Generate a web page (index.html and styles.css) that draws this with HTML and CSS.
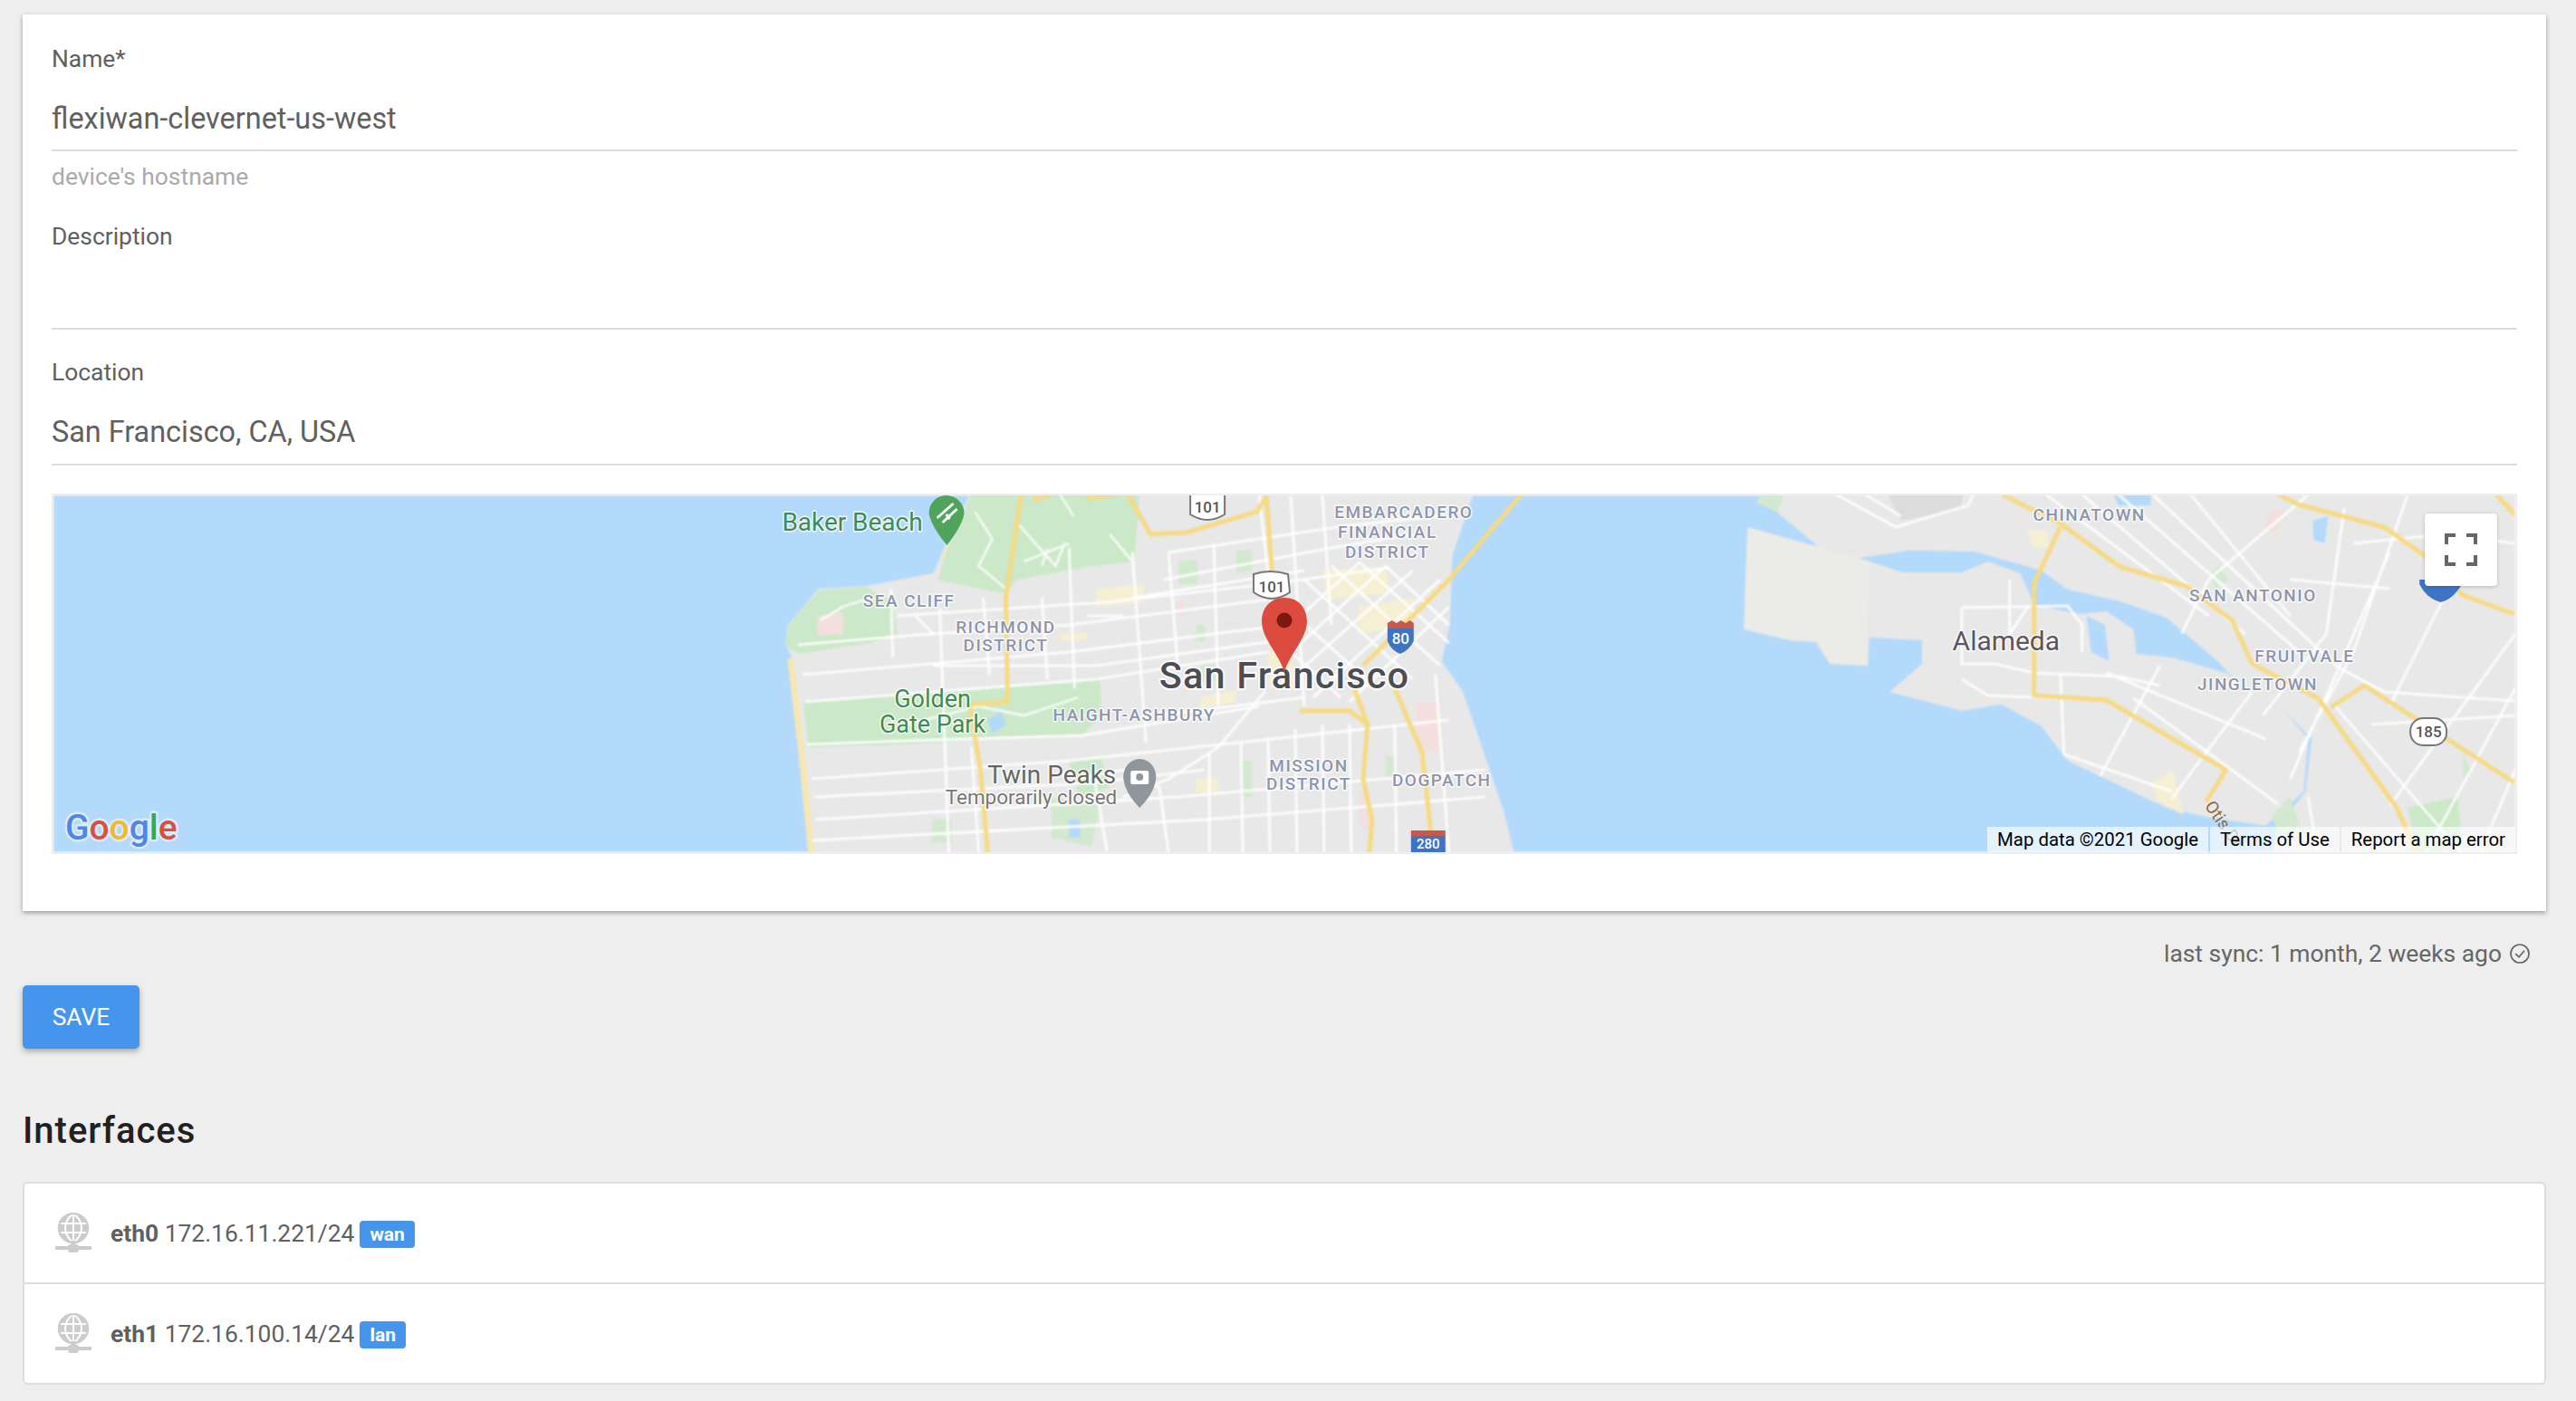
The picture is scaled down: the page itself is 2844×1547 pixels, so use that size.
FILE: index.html
```html
<!DOCTYPE html>
<html lang="en">
<head>
  <meta charset="UTF-8">
  <meta name="viewport" content="width=device-width, initial-scale=1.0">
  <title>Device</title>
  <link rel="stylesheet" href="styles.css">
</head>
<body>
  <div class="page">
    <form class="card">
      <div class="field">
        <label class="field-label">Name*</label>
        <div class="field-value">flexiwan-clevernet-us-west</div>
      </div>
      <div class="field-help">device's hostname</div>
      <div class="field field-next">
        <label class="field-label">Description</label>
        <div class="field-value"></div>
      </div>
      <div class="field field-next">
        <label class="field-label">Location</label>
        <div class="field-value">San Francisco, CA, USA</div>
      </div>

      <div class="map">
        <svg class="map-canvas" viewBox="57 547 2722 394" preserveAspectRatio="none">
          <g class="map-shapes">
            <rect class="water" x="57" y="547" width="2722" height="394"/>
            <!-- san francisco -->
            <path class="land" d="M1070 546 L1041 607 L1030 633 L955 647 L903 650 L869 690 L866 710 L875 730 L895 942 L1672 942 L1661 897 L1644 847 L1627 797 L1615 763 L1592 730 L1601 690 L1604 613 L1627 546Z"/>
            <path class="beach" d="M872 727 L884 830 L895 942 M1062 580 L1041 620"/>
            <path class="park" d="M1072 546 L1044 610 L1035 640 L1110 656 L1122 640 L1205 625 L1252 620 L1258 546Z"/>
            <path class="park" d="M903 652 L955 648 L985 665 L990 700 L960 710 L880 722 L866 712 L870 690Z"/>
            <path class="park" d="M886 775 L1000 765 L1072 760 L1214 748 L1216 790 L1196 810 L1000 822 L892 825Z"/>
            <path class="park" d="M1180 840 L1215 835 L1225 870 L1190 880Z"/>
            <path class="park-soft" d="M1160 880 L1215 890 L1205 935 L1160 925Z"/>
            <path class="park-soft" d="M1300 620 L1322 618 L1322 645 L1302 645Z M1365 608 L1382 606 L1382 630 L1365 632Z M1325 735 L1345 733 L1345 752 L1325 754Z M1320 690 L1330 690 L1330 708 L1320 708Z M1395 690 L1410 688 L1410 700 L1395 702Z M1530 835 L1540 835 L1540 860 L1530 860Z M1370 840 L1382 840 L1382 880 L1370 880Z M1028 905 L1050 905 L1050 930 L1028 930Z"/>
            <path class="water" d="M1090 795 L1105 785 L1110 800 L1095 810Z M1180 905 L1192 905 L1192 925 L1180 925Z"/>
            <path class="pink" d="M902 680 L930 676 L930 700 L902 702Z M1300 665 L1308 665 L1308 680 L1300 680Z"/>
            <path class="tint" d="M1210 650 L1262 645 L1262 665 L1210 670Z M1460 630 L1530 625 L1535 655 L1465 662Z M1170 700 L1200 698 L1200 706 L1170 708Z M1325 770 L1365 762 L1365 775 L1325 782Z M1320 860 L1345 860 L1345 875 L1320 875Z M1400 720 L1425 715 L1430 760 L1400 760Z M1500 670 L1560 660 L1560 690 L1500 700Z"/>
            <path class="pink" d="M1563 775 L1590 775 L1590 830 L1565 830Z M1500 875 L1512 872 L1515 915 L1502 915Z"/>
            <!-- east bay -->
            <path class="land" d="M1970 546 L1963 566 L2028 620 L2109 608 L2181 609 L2255 630 L2284 651 L2342 664 L2393 682 L2451 731 L2481 764 L2524 785 L2554 816 L2547 874 L2517 912 L2510 942 L2779 942 L2779 546Z"/>
            <path class="land" d="M1930 582 L2065 620 L2102 632 L2167 632 L2196 620 L2232 633 L2247 668 L2298 678 L2327 675 L2357 695 L2360 722 L2400 726 L2459 743 L2524 785 L2550 816 L2545 874 L2503 912 L2437 902 L2393 892 L2284 840 L2255 802 L2211 778 L2167 785 L2087 764 L2123 733 L2123 707 L2065 704 L2063 735 L2021 733 L2006 709 L1977 707 L1926 695Z"/>
            <path class="sand" d="M1930 582 L2065 620 L2063 705 L2063 735 L2021 733 L2006 709 L1977 707 L1926 695Z"/>
            <path class="dock" d="M2085 546 L2168 546 L2166 562 L2100 575Z"/>
            <path class="water" d="M2335 546 L2376 546 L2376 558 L2340 558Z"/>
            <path class="water" d="M2305 680 L2325 690 L2330 730 L2310 720Z"/>
            <path class="water" d="M2555 575 L2572 570 L2568 600 L2556 596Z"/>
            <path class="park-soft" d="M1945 546 L1970 546 L1963 566 L1940 555Z"/>
            <path class="park" d="M2660 892 L2715 880 L2720 930 L2690 942 L2670 942Z"/>
            <path class="park-soft" d="M2450 625 L2462 640 L2448 650 L2442 635Z M2510 900 L2530 880 L2540 910 L2520 930Z M2720 830 L2730 850 L2722 860Z"/>
            <path class="pink" d="M2505 565 L2525 560 L2515 590 L2502 580Z"/>
            <path class="tint" d="M2375 865 L2400 850 L2412 900 L2385 885Z M2240 585 L2262 585 L2262 605 L2245 605Z"/>

            <!-- streets -->
            <path class="street" d="M990 680 L1220 665 L1400 645 L1535 627 M880 712 L1000 702 L1180 690 L1400 662 M885 745 L1180 720 L1420 690 M1030 735 L1210 735 L1420 706 M888 775 L1210 750 L1400 720 M890 822 L1000 818 L1195 812 L1390 780 M895 860 L1180 840 L1320 825 L1600 795 M898 880 L1200 865 L1330 850 M900 905 L1300 880 L1640 850 M896 928 L1330 905 L1640 880 M1290 610 L1490 580 L1590 570 M1285 640 L1470 605 L1560 590 M1250 660 L1440 630 M1280 790 L1440 770"/>
            <path class="street" d="M983 650 L985 725 M1037 672 L1047 942 M1085 660 L1092 745 M1072 825 L1080 942 M1180 605 L1186 760 M1150 660 L1156 750 M1208 860 L1222 940 M1250 610 L1265 820 M1290 610 L1300 735 M1340 600 L1345 780 M1425 548 L1440 780 M1390 546 L1410 720 M1460 546 L1470 690 M1335 830 L1335 942 M1370 820 L1372 942 M1400 815 L1402 942 M1430 805 L1432 942 M1460 800 L1462 942 M1490 800 L1492 942 M1540 800 L1542 942 M1585 745 L1600 942"/>
            <path class="street" d="M1397 763 L1345 825 L1290 860 L1240 880 M1190 860 L1240 850 L1280 870 L1290 942 M1200 680 L1240 680"/>
            <path class="trail" d="M1076 565 L1095 595 L1080 625 L1110 650 M1125 580 L1165 625 L1175 600 M1170 546 L1185 570 M1225 590 L1250 620 M1130 620 L1180 600 M1010 680 L1030 700 M1000 800 L1080 780 L1130 790 L1190 770 M905 685 L930 670 L960 660 M1150 625 L1156 606"/>
            <path class="street" d="M1440 640 L1560 750 M1470 625 L1590 735 M1500 620 L1600 710 M1530 625 L1600 690 M1430 680 L1520 760 M1420 715 L1480 770 M1590 640 L1450 770 M1600 670 L1490 775 M1560 630 L1430 745 M1530 625 L1425 720 M1500 622 L1425 690"/>
            <path class="street" d="M2028 546 L2094 582 L2174 558 L2180 546 M2060 546 L2100 570 M2167 671 L2284 669 L2300 690 L2300 720 M2167 671 L2167 733 L2203 733 L2247 743 L2342 747 L2386 757 M2167 750 L2196 768 L2327 773 M2386 735 L2320 857 M2327 743 L2503 816 M2276 743 L2280 833 L2400 874 M2357 771 L2517 888 M2488 764 L2430 840 L2400 881 M2220 640 L2220 700 L2240 670"/>
            <path class="street" d="M2378 546 L2583 737 L2634 764 L2778 774 M2340 546 L2540 720 M2300 546 L2480 700 M2260 546 L2440 680 M2420 546 L2530 680 M2550 546 L2440 640 L2410 700 M2590 560 L2570 700 L2500 790 M2640 610 L2530 860 M2660 546 L2600 720 L2540 830 M2600 600 L2700 590 L2779 600 M2779 700 L2640 890 M2779 760 L2680 942 M2779 850 L2740 942 M2700 660 L2640 780 M2550 880 L2560 942 M2580 780 L2720 942 M2620 800 L2779 790 M2530 640 L2640 650"/>

            <!-- highways -->
            <path class="highway" d="M1127 546 L1110 660 L1112 775 L1070 778 L1082 850 L1090 942 M1245 546 L1270 590 L1310 588 L1388 565 L1398 548 L1405 640 M1435 785 L1490 785 L1510 800 L1505 860 L1515 905 L1512 942 M1495 760 L1510 800 M1540 760 L1570 830 L1578 900 L1582 942 M1505 735 L1600 640 L1680 546 M1230 546 L1200 550 M1160 546 L1140 552"/>
            <path class="highway" d="M2211 546 L2276 578 L2342 626 L2415 647 L2466 685 L2488 733 L2561 771 L2648 892 L2670 942 M2276 582 L2247 644 L2247 768 L2327 773 L2459 850 L2437 885 M2517 546 L2539 557 L2634 582 L2678 613 L2721 657 L2778 678 M2575 781 L2612 757 L2778 864 M2758 546 L2778 568"/>
          </g>

          <!-- shields -->
          <g class="shield">
            <path d="M1314 546 L1352 546 L1352 568 Q1333 580 1314 568Z"/>
            <path d="M1384 634 Q1402 628 1422 634 L1424 654 Q1404 668 1384 654Z"/>
            <rect x="2663" y="793" width="40" height="30" rx="14"/>
          </g>
          <text class="shield-text" x="1333" y="566">101</text>
          <text class="shield-text" x="1404" y="654">101</text>
          <text class="shield-text" x="2683" y="814">185</text>

          <path class="shield-red" d="M1532 688 L1537 685 L1542 688 L1547 685 L1552 688 L1557 685 L1561 688 L1561 694 L1532 694Z"/>
          <path class="shield-blue" d="M1532 694 L1561 694 L1561 708 Q1556 718 1546 722 Q1536 718 1532 708Z"/>
          <text class="shield-light" x="1546.5" y="711">80</text>
          <path class="shield-red" d="M1558 917 L1596 917 L1596 923 L1558 923Z"/>
          <path class="shield-blue" d="M1558 923 L1596 923 L1596 941 L1558 941Z"/>
          <text class="shield-light shield-small" x="1577" y="937">280</text>
          <path class="shield-blue" d="M2673 640 L2720 640 L2720 645 Q2710 662 2696 665 Q2680 660 2673 645Z"/>

          <!-- place labels -->
          <text class="label-area" x="1550" y="572">EMBARCADERO</text>
          <text class="label-area" x="1532" y="594">FINANCIAL</text>
          <text class="label-area" x="1532" y="616">DISTRICT</text>
          <text class="label-area" x="1003" y="670">SEA CLIFF</text>
          <text class="label-area" x="1110" y="699">RICHMOND</text>
          <text class="label-area" x="1110" y="719">DISTRICT</text>
          <text class="label-area" x="1252" y="796">HAIGHT-ASHBURY</text>
          <text class="label-area" x="1445" y="852">MISSION</text>
          <text class="label-area" x="1445" y="872">DISTRICT</text>
          <text class="label-area" x="1592" y="868">DOGPATCH</text>
          <text class="label-area" x="2308" y="575">CHINATOWN</text>
          <text class="label-area" x="2489" y="664">SAN ANTONIO</text>
          <text class="label-area" x="2546" y="731">FRUITVALE</text>
          <text class="label-area" x="2494" y="762">JINGLETOWN</text>

          <text class="label-park" x="1018" y="586">Baker Beach</text>
          <path class="pin-green" d="M1044 547 A20 20 0 0 1 1064 567 Q1062 580 1045 602 Q1028 582 1025 567 A19 20 0 0 1 1044 547Z"/>
          <path class="pin-green-mark" d="M1034 572 L1052 556 M1040 577 L1056 562 M1044 568 L1048 573"/>
          <text class="label-park-big" x="1029" y="781">Golden</text>
          <text class="label-park-big" x="1029" y="809">Gate Park</text>
          <text class="label-peak" x="1232" y="865">Twin Peaks</text>
          <text class="label-closed" x="1233" y="888">Temporarily closed</text>
          <path class="pin-grey" d="M1258 838 A18 20 0 0 1 1276 860 Q1274 876 1258 892 Q1242 876 1240 860 A18 20 0 0 1 1258 838Z"/>
          <rect class="pin-dot" x="1248" y="851" width="20" height="15" rx="2"/>
          <circle class="pin-grey" cx="1258" cy="858" r="4"/>
          <text class="label-alameda" x="2216" y="718">Alameda</text>
          <text class="label-city" x="1418" y="760">San Francisco</text>
          <text class="label-road" x="2435" y="890" transform="rotate(55 2435 890)">Otis Dr</text>

          <!-- marker -->
          <path class="marker" d="M1418 660 C1402 660 1393 672 1393 686 C1393 705 1412 722 1418 742 C1424 722 1443 705 1443 686 C1443 672 1434 660 1418 660Z"/>
          <circle class="marker-dot" cx="1418" cy="685" r="8.5"/>

          <text class="logo" x="70" y="927"><tspan class="logo-blue">G</tspan><tspan class="logo-red">o</tspan><tspan class="logo-yellow">o</tspan><tspan class="logo-blue">g</tspan><tspan class="logo-green">l</tspan><tspan class="logo-red">e</tspan></text>
        </svg>

        <button type="button" class="map-fullscreen">
          <svg width="36" height="36" viewBox="0 0 36 36">
            <path d="M2 12 V2 H12 M24 2 H34 V12 M34 24 V34 H24 M12 34 H2 V24" fill="none" stroke="#666" stroke-width="4"/>
          </svg>
        </button>
        <div class="map-credits">
          <span>Map data ©2021 Google</span>
          <span>Terms of Use</span>
          <span>Report a map error</span>
        </div>
      </div>
    </form>

    <div class="sync">
      <span>last sync: 1 month, 2 weeks ago</span>
      <svg width="22" height="22" viewBox="0 0 22 22">
        <circle cx="11" cy="11" r="10" fill="none" stroke="#666" stroke-width="1.7"/>
        <path d="M6.2 11.2 L10 14.8 L16 7.8" fill="none" stroke="#666" stroke-width="1.7"/>
      </svg>
    </div>

    <button type="button" class="btn-save">SAVE</button>

    <h2 class="section-title">Interfaces</h2>

    <ul class="iface-list">
      <li class="iface">
        <svg class="iface-icon" width="40" height="46" viewBox="0 0 40 46">
          <circle cx="20" cy="17" r="16" fill="#ccc"/>
          <path d="M5 12 H35 M5 22 H35 M20 1 V33 M20 1 C8 10 8 24 20 33 M20 1 C32 10 32 24 20 33" fill="none" stroke="#fff" stroke-width="2"/>
          <circle cx="20" cy="17" r="16" fill="none" stroke="#ccc" stroke-width="2.5"/>
          <rect x="17.5" y="31" width="5" height="10" fill="#ccc"/>
          <rect x="0" y="37" width="40" height="4" fill="#ccc"/>
          <rect x="14" y="35" width="12" height="9" rx="3" fill="#ccc"/>
        </svg>
        <span class="iface-text"><b>eth0</b> 172.16.11.221/24</span>
        <span class="badge">wan</span>
      </li>
      <li class="iface">
        <svg class="iface-icon" width="40" height="46" viewBox="0 0 40 46">
          <circle cx="20" cy="17" r="16" fill="#ccc"/>
          <path d="M5 12 H35 M5 22 H35 M20 1 V33 M20 1 C8 10 8 24 20 33 M20 1 C32 10 32 24 20 33" fill="none" stroke="#fff" stroke-width="2"/>
          <circle cx="20" cy="17" r="16" fill="none" stroke="#ccc" stroke-width="2.5"/>
          <rect x="17.5" y="31" width="5" height="10" fill="#ccc"/>
          <rect x="0" y="37" width="40" height="4" fill="#ccc"/>
          <rect x="14" y="35" width="12" height="9" rx="3" fill="#ccc"/>
        </svg>
        <span class="iface-text"><b>eth1</b> 172.16.100.14/24</span>
        <span class="badge">lan</span>
      </li>
    </ul>
  </div>
</body>
</html>
```

FILE: styles.css
```css
* {
  box-sizing: border-box;
}

body {
  margin: 0;
  background-color: #eeeeee;
  font-family: Roboto, 'Liberation Sans', sans-serif;
  color: #606060;
}

.page {
  padding: 16px 33px 18px 25px;
}

.card {
  background-color: #fff;
  padding: 33px 32px 63px;
  box-shadow: 0 2px 5px rgba(0, 0, 0, 0.35);
}

.field {
  border-bottom: 2px solid #ddd;
}

.field-next {
  margin-top: 31px;
}

.field-label {
  display: block;
  font-size: 26.4px;
  line-height: 32px;
  margin-bottom: 26px;
}

.field-value {
  font-size: 32.4px;
  line-height: 48px;
  height: 58px;
}

.field-next .field-value {
  height: 59px;
}

.field-help {
  font-size: 26.4px;
  line-height: 32px;
  margin-top: 12px;
  color: #aaa;
}

.field-help + .field-next {
  margin-top: 34px;
}

.map {
  position: relative;
  height: 398px;
  margin-top: 31px;
  border: 2px solid #eee;
  overflow: hidden;
}

.map-canvas {
  display: block;
  width: 100%;
  height: 100%;
}

.map-shapes {
  filter: blur(0.8px);
}

.water { fill: #b3d9fb; }
.land { fill: #e8e8e8; }
.sand { fill: #ebebe7; }
.dock { fill: #dcdcdc; }
.park { fill: #cbe8c8; }
.park-soft { fill: #d3e9cf; }
.pink { fill: #f3e0de; }
.tint { fill: #f5efd4; }

.beach {
  fill: none;
  stroke: #f6e7b4;
  stroke-width: 7;
}

.street {
  fill: none;
  stroke: #fff;
  stroke-width: 2.6;
}

.trail {
  fill: none;
  stroke: #fff;
  stroke-width: 2.2;
}

.highway {
  fill: none;
  stroke: #f6da82;
  stroke-width: 5;
}

.shield path,
.shield rect {
  fill: #fff;
  stroke: #777;
  stroke-width: 2;
}

.shield-text,
.shield-light {
  font-size: 17px;
  font-weight: 500;
  text-anchor: middle;
  fill: #555;
}

.shield-light { fill: #fff; }
.shield-small { font-size: 15px; }
.shield-red { fill: #c9584b; }
.shield-blue { fill: #3f74c4; }

.map-canvas text {
  paint-order: stroke;
  stroke-linejoin: round;
}

.label-area {
  font-size: 19px;
  font-weight: 500;
  letter-spacing: 1.5px;
  text-anchor: middle;
  fill: #8d94ad;
  stroke: rgba(255, 255, 255, 0.8);
  stroke-width: 3px;
}

.label-park,
.label-park-big {
  font-size: 28px;
  text-anchor: end;
  fill: #3f8b54;
  stroke: rgba(255, 255, 255, 0.8);
  stroke-width: 3px;
}

.label-park-big {
  font-size: 27px;
  text-anchor: middle;
}

.label-peak,
.label-closed {
  font-size: 28px;
  text-anchor: end;
  fill: #666;
  stroke: rgba(255, 255, 255, 0.8);
  stroke-width: 3px;
}

.label-closed {
  font-size: 22.5px;
  fill: #777;
}

.label-alameda {
  font-size: 30px;
  text-anchor: middle;
  fill: #5b5560;
  stroke: rgba(255, 255, 255, 0.8);
  stroke-width: 3px;
}

.label-city {
  font-size: 41.5px;
  font-weight: 500;
  letter-spacing: 1.2px;
  text-anchor: middle;
  fill: #4d4d55;
  stroke: rgba(255, 255, 255, 0.85);
  stroke-width: 4px;
}

.label-road {
  font-size: 19px;
  fill: #8a6a3f;
}

.pin-green { fill: #4ea45a; }
.pin-grey { fill: #8f979d; }
.pin-dot { fill: #fff; }
.marker { fill: #dd4b3e; }
.marker-dot { fill: #7c1a12; }

.pin-green-mark {
  fill: none;
  stroke: #fff;
  stroke-width: 3;
}

.logo {
  font-size: 39px;
  font-weight: 500;
  stroke: rgba(255, 255, 255, 0.5);
  stroke-width: 5px;
}

.logo-blue { fill: #4f86e8; }
.logo-red { fill: #d9503f; }
.logo-yellow { fill: #f1b92f; }
.logo-green { fill: #3ca653; }

.map-fullscreen {
  position: absolute;
  top: 20px;
  right: 20px;
  width: 80px;
  height: 80px;
  padding: 0;
  border: none;
  border-radius: 4px;
  background-color: #fff;
  box-shadow: 0 1px 4px rgba(0, 0, 0, 0.2);
  display: flex;
  align-items: center;
  justify-content: center;
}

.map-credits {
  position: absolute;
  right: 0;
  bottom: 0;
  display: flex;
  height: 28px;
  gap: 2px;
  font-size: 20.4px;
  line-height: 28px;
  color: #000;
}

.map-credits span {
  padding: 0 11px;
  background-color: rgba(255, 255, 255, 0.65);
}

.sync {
  display: flex;
  justify-content: flex-end;
  align-items: center;
  gap: 9px;
  height: 32px;
  margin-top: 31px;
  padding-right: 18px;
  font-size: 26.4px;
  color: #666;
}

.btn-save {
  display: block;
  width: 129px;
  height: 70px;
  margin-top: 19px;
  border: none;
  border-radius: 5px;
  background-color: #4695ec;
  color: #fff;
  font-family: inherit;
  font-size: 26.4px;
  box-shadow: 0 3px 6px rgba(0, 0, 0, 0.3);
}

.section-title {
  margin: 67px 0 0;
  font-size: 40px;
  line-height: 48px;
  font-weight: 500;
  letter-spacing: 1px;
  color: #212121;
}

.iface-list {
  list-style: none;
  margin: 32px 0 0;
  padding: 0;
  background-color: #fff;
  border: 2px solid #ddd;
  border-radius: 6px;
}

.iface {
  display: flex;
  align-items: center;
  height: 109px;
  padding-left: 34px;
}

.iface + .iface {
  height: 111px;
  border-top: 2px solid #ddd;
}

.iface-icon {
  margin-right: 21px;
}

.iface-text {
  font-size: 26.4px;
  white-space: pre;
}

.iface-text b {
  font-weight: 700;
}

.badge {
  margin: 3px 0 0 6px;
  padding: 0 11px;
  height: 30px;
  line-height: 30px;
  border-radius: 4px;
  background-color: #4695ec;
  color: #fff;
  font-size: 21px;
  font-weight: 700;
}
```
